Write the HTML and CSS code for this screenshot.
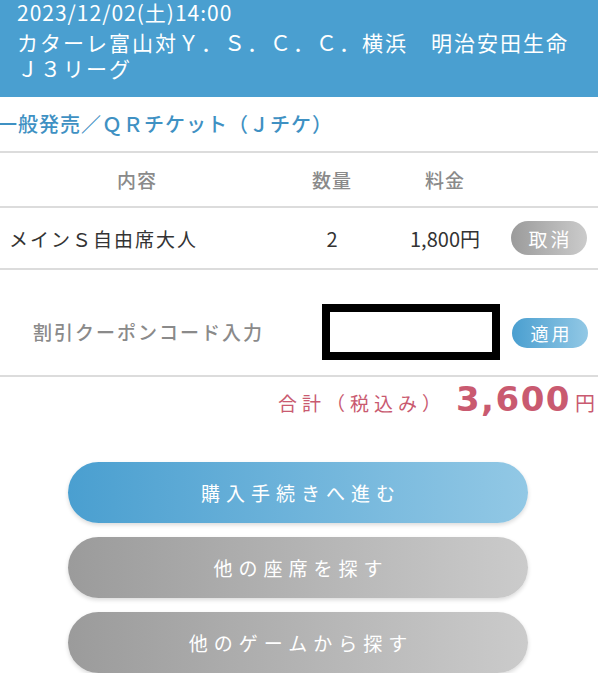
FILE: index.html
```html
<!DOCTYPE html>
<html lang="ja">
  <head>
    <meta charset="UTF-8" />
    <meta name="viewport" content="width=device-width, initial-scale=1.0" />
    <title>購入内容の確認</title>
    <link rel="stylesheet" href="styles.css">
  </head>
  <body>
    <div class="header">
      <div class="match-date">2023/12/02(土)14:00</div>
      <div class="match-title">カターレ富山対Ｙ．Ｓ．Ｃ．Ｃ．横浜　明治安田生命Ｊ３リーグ</div>
    </div>

    <h2 class="sale-title">一般発売／ＱＲチケット（Ｊチケ）</h2>

    <div class="ticket-table">
      <div class="row head">
        <div class="cell">内容</div>
        <div class="cell">数量</div>
        <div class="cell">料金</div>
        <div class="cell"></div>
      </div>
      <div class="row item">
        <div class="cell name">メインＳ自由席大人</div>
        <div class="cell">2</div>
        <div class="cell">1,800円</div>
        <div class="cell"><button class="pill grey small">取消</button></div>
      </div>
    </div>

    <div class="coupon">
      <div class="coupon-label">割引クーポンコード入力</div>
      <input type="text" class="coupon-input" id="coupon-input" />
      <button class="pill blue small apply">適用</button>
    </div>

    <div class="total">
      <span class="total-label">合計（税込み）</span>
      <span class="total-amount">3,600</span>
      <span class="total-yen">円</span>
    </div>

    <div class="actions">
      <button class="pill blue big">購入手続きへ進む</button>
      <button class="pill grey big">他の座席を探す</button>
      <button class="pill grey big">他のゲームから探す</button>
    </div>
  </body>
</html>
```

FILE: styles.css
```css
:root {
  --blue: #4a9fd0;
  --blue-light: #92c8e5;
  --grey: #9b9b9b;
  --grey-light: #cbcbcb;
  --line: #dcdcdc;
  --total-color: #c95a70;
}

* {
  margin: 0;
  padding: 0;
  box-sizing: border-box;
}

body {
  font-family: "Noto Sans CJK JP", "Noto Sans", sans-serif;
  color: #333;
  background-color: #fff;
  width: 598px;
  overflow: hidden;
}

.header {
  background-color: var(--blue);
  color: #fff;
  height: 97px;
  padding: 0 20px 0 17px;
}

.match-date {
  font-size: 21px;
  letter-spacing: 1px;
  line-height: 24px;
}

.match-title {
  font-size: 21px;
  letter-spacing: 2px;
  line-height: 26px;
  margin-top: 5px;
}

.sale-title {
  color: #3f91c3;
  font-size: 20px;
  font-weight: 500;
  letter-spacing: 1px;
  line-height: 54px;
  margin-left: -3px;
}

.ticket-table {
  border-top: 2px solid var(--line);
}

.row {
  display: grid;
  grid-template-columns: 274px 116px 110px 98px;
  align-items: center;
  border-bottom: 2px solid var(--line);
}

.row.head {
  height: 55px;
  color: #8a8a8a;
  font-size: 19px;
  font-weight: 500;
  letter-spacing: 1px;
}

.row.item {
  height: 62px;
  font-size: 20px;
}

.cell {
  text-align: center;
}

.cell.name {
  text-align: left;
  padding-left: 9px;
  font-size: 19px;
  letter-spacing: 2px;
}

.pill {
  border: none;
  color: #fff;
  font-family: inherit;
  cursor: pointer;
  border-radius: 999px;
}

.pill.blue {
  background: linear-gradient(to right, var(--blue), var(--blue-light));
}

.pill.grey {
  background: linear-gradient(to right, var(--grey), var(--grey-light));
}

.pill.small {
  width: 76px;
  height: 34px;
  font-size: 19px;
  letter-spacing: 3px;
  padding-left: 3px;
}

.coupon {
  height: 107px;
  display: flex;
  align-items: center;
  border-bottom: 2px solid var(--line);
  padding: 18px 0 0 33px;
}

.coupon-label {
  width: 289px;
  color: #8a8a8a;
  font-size: 19px;
  font-weight: 500;
  letter-spacing: 2px;
}

.coupon-input {
  width: 178px;
  height: 56px;
  border: 8px solid #000;
  background: #fff;
}

.pill.apply {
  height: 30px;
  font-size: 18px;
  margin-left: 12px;
  margin-top: 2px;
}

.total {
  display: flex;
  justify-content: flex-end;
  align-items: baseline;
  padding: 2px 3px 0 0;
  height: 50px;
  color: var(--total-color);
}

.total-label {
  font-size: 19px;
  letter-spacing: 5px;
}

.total-amount {
  font-family: "DejaVu Sans", sans-serif;
  font-weight: bold;
  font-size: 34px;
  letter-spacing: 1.5px;
  margin: 0 4px 0 10px;
}

.total-yen {
  font-size: 20px;
}

.actions {
  display: flex;
  flex-direction: column;
  gap: 14px;
  padding: 35px 0 0 68px;
}

.pill.big {
  width: 460px;
  height: 61px;
  font-size: 19px;
  letter-spacing: 6px;
  padding-left: 6px;
  box-shadow: 0 2px 4px rgba(0, 0, 0, 0.15);
}
```
